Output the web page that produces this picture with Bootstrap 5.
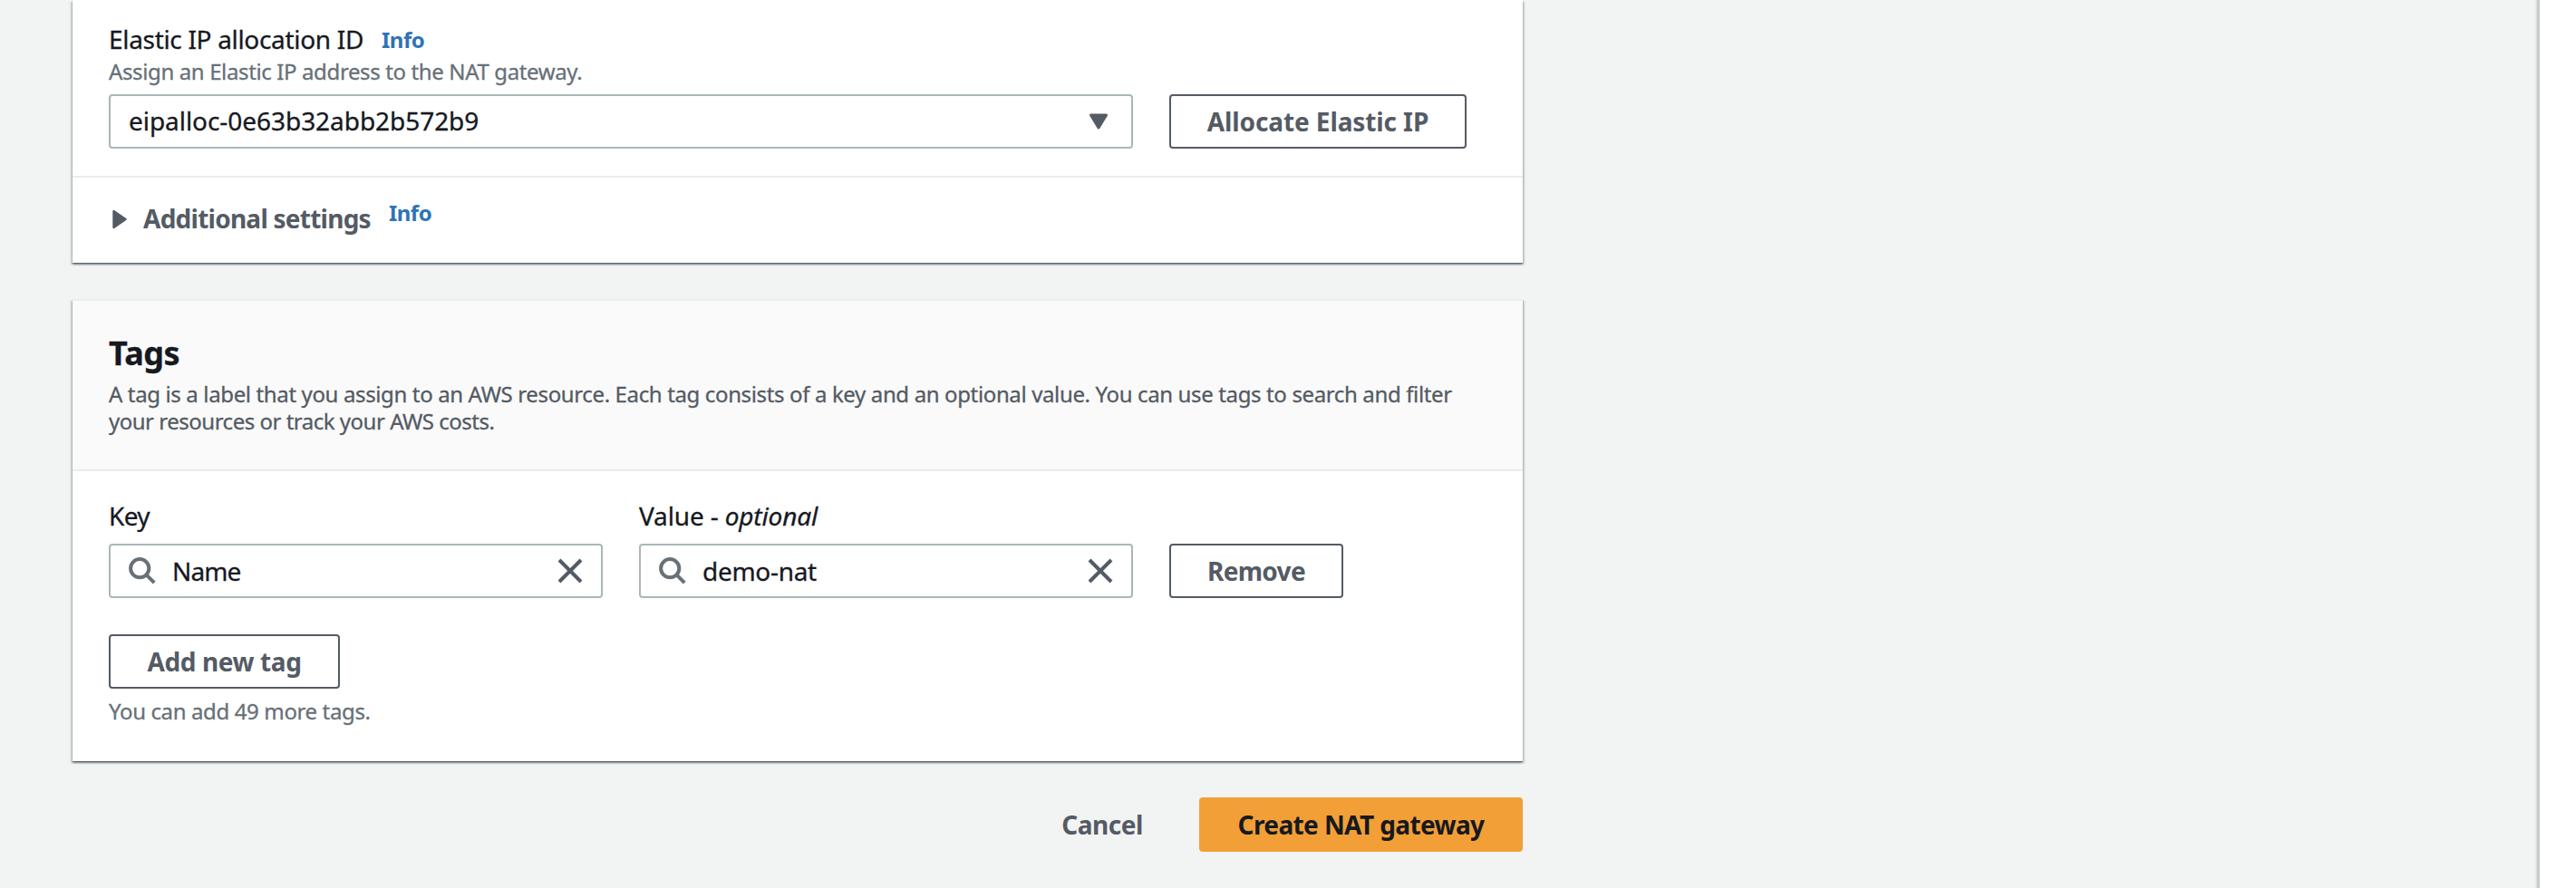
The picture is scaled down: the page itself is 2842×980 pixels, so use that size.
<!DOCTYPE html>
<html lang="en">
<head>
<meta charset="utf-8">
<title>Create NAT gateway</title>
<link rel="stylesheet" href="https://cdn.jsdelivr.net/npm/bootstrap@5.3.0/dist/css/bootstrap.min.css">
<style>
body{font-family:"Noto Sans","Open Sans",sans-serif;font-size:28px;line-height:40px;color:#16191f;background:#f2f3f3;letter-spacing:-.32px;-webkit-text-stroke:.3px}
.page{height:980px}
.main-col{width:1600px;margin-left:80px}
.side-panel{width:43px;background:#fff;border-left:3px solid #c9cccf;box-shadow:-1px 0 2px rgba(0,28,36,.14)}
.gap-col{gap:40px}

.panel{--bs-card-border-width:0;--bs-card-border-radius:0;--bs-card-inner-border-radius:0;--bs-card-color:#16191f;box-shadow:0 2px 2px 0 rgba(0,28,36,.3),2px 2px 2px 0 rgba(0,28,36,.15),-2px 2px 2px 0 rgba(0,28,36,.15),0 1px 1px rgba(0,28,36,.3)}
.panel-tags{margin-top:40px;border-top:2px solid #eaeded}
.panel-head{height:188px;padding:36px 40px 0;background:#fafafa;border-bottom:2px solid #eaeded}
.panel-title{font-size:36px;line-height:44px;letter-spacing:-.57px;margin:0 0 8px}
.panel-ip{padding:23px 40px 30px}
.panel-body{padding:29px 40px 39px}

.desc{font-size:24px;line-height:30px;letter-spacing:-.365px;color:#545b64;white-space:nowrap}
.desc-end{letter-spacing:-.49px}
.hint{font-size:24px;line-height:32px;letter-spacing:-.375px;color:#687078;margin-bottom:9px}
.hint-below{margin:9px 0 0}
.info{font-size:24px;font-weight:700;letter-spacing:-.5px;color:#2e73b8;text-decoration:none;-webkit-text-stroke:0}
.info-label{height:40px;line-height:42px;margin-left:20px}
.info-expander{margin:-6px 0 0 20px}

.field{height:60px;border:2px solid #aab7b8;border-radius:4px;background:#fff;padding:0 20px}
.field-select{width:1130px;padding:0 25px 2px 20px;letter-spacing:-.05px}
.field-select svg{margin-top:3px}
.tag-col{width:545px}
.tag-col label{margin-bottom:11px}
.tag-col .field span{margin-left:18px}
.lbl-key{letter-spacing:-.6px}
.lbl-value{letter-spacing:-.15px}
.txt-key{letter-spacing:-.85px}
.txt-value{letter-spacing:-.3px}

.btn-console{--bs-btn-font-size:28px;--bs-btn-font-weight:700;--bs-btn-line-height:40px;--bs-btn-color:#545b64;--bs-btn-border-color:#545b64;--bs-btn-bg:#fff;--bs-btn-border-width:2px;--bs-btn-border-radius:4px;height:60px;padding:8px 0;white-space:nowrap;-webkit-text-stroke:0}
.btn-allocate{width:328px;letter-spacing:-.1px}
.btn-remove{width:192px;letter-spacing:-.7px}
.btn-add{width:255px;margin-top:40px;letter-spacing:-.39px}
.btn-main{--bs-btn-color:#16191f;--bs-btn-bg:#f29f38;--bs-btn-border-color:#f29f38;width:357px;letter-spacing:-.6px}
.btn-plain{--bs-btn-bg:transparent;--bs-btn-border-color:transparent;width:134px;letter-spacing:-.5px}
.actions{margin-top:40px}

.expander{height:96px;border-top:2px solid #eaeded;padding:25px 40px 0 44px;color:#545b64}
.expander svg{margin-top:10px}
.expander-title{margin-left:18px;letter-spacing:-.75px;-webkit-text-stroke:0}
</style>
</head>
<body>
<div class="page d-flex justify-content-between overflow-hidden">
  <main class="main-col">
    <section class="card panel">
      <div class="panel-ip">
        <div class="d-flex"><label>Elastic IP allocation ID</label><a class="info info-label" href="#">Info</a></div>
        <div class="hint">Assign an Elastic IP address to the NAT gateway.</div>
        <div class="d-flex gap-col">
          <div class="field field-select d-flex align-items-center justify-content-between">
            <span>eipalloc-0e63b32abb2b572b9</span>
            <svg width="22" height="20" viewBox="0 0 22 20"><path d="M2.5 2h17L11 16z" fill="#545b64" stroke="#545b64" stroke-width="3" stroke-linejoin="round"/></svg>
          </div>
          <button class="btn btn-console btn-allocate">Allocate Elastic IP</button>
        </div>
      </div>
      <div class="expander d-flex">
        <svg width="16" height="22" viewBox="0 0 16 22"><path d="M1.5 2v18L14.5 11z" fill="#545b64" stroke="#545b64" stroke-width="2.4" stroke-linejoin="round"/></svg>
        <span class="expander-title fw-bold">Additional settings</span>
        <a class="info info-expander" href="#">Info</a>
      </div>
    </section>

    <section class="card panel panel-tags">
      <div class="card-header panel-head">
        <h2 class="panel-title fw-bold">Tags</h2>
        <div class="desc">A tag is a label that you assign to an AWS resource. Each tag consists of a key and an optional value. You can use tags to search and filter<br><span class="desc-end">your resources or track your AWS costs.</span></div>
      </div>
      <div class="card-body panel-body">
        <div class="d-flex align-items-end gap-col">
          <div class="tag-col">
            <label class="lbl-key d-block">Key</label>
            <div class="field d-flex align-items-center">
              <svg width="30" height="30" viewBox="0 0 30 30" fill="none" stroke="#687078" stroke-width="4"><circle cx="12.2" cy="12.2" r="10.1"/><path d="M19.2 19.2l9 9"/></svg>
              <span class="txt-key flex-grow-1">Name</span>
              <svg width="28" height="28" viewBox="0 0 28 28" fill="none" stroke="#545b64" stroke-width="4"><path d="M2 2l24 24M26 2L2 26"/></svg>
            </div>
          </div>
          <div class="tag-col">
            <label class="lbl-value d-block">Value - <em>optional</em></label>
            <div class="field d-flex align-items-center">
              <svg width="30" height="30" viewBox="0 0 30 30" fill="none" stroke="#687078" stroke-width="4"><circle cx="12.2" cy="12.2" r="10.1"/><path d="M19.2 19.2l9 9"/></svg>
              <span class="txt-value flex-grow-1">demo-nat</span>
              <svg width="28" height="28" viewBox="0 0 28 28" fill="none" stroke="#545b64" stroke-width="4"><path d="M2 2l24 24M26 2L2 26"/></svg>
            </div>
          </div>
          <button class="btn btn-console btn-remove">Remove</button>
        </div>
        <button class="btn btn-console btn-add d-block">Add new tag</button>
        <div class="hint hint-below">You can add 49 more tags.</div>
      </div>
    </section>

    <div class="actions d-flex justify-content-end gap-col">
      <button class="btn btn-console btn-plain">Cancel</button>
      <button class="btn btn-console btn-main">Create NAT gateway</button>
    </div>
  </main>
  <aside class="side-panel"></aside>
</div>
<script src="https://cdn.jsdelivr.net/npm/bootstrap@5.3.0/dist/js/bootstrap.bundle.min.js"></script>
</body>
</html>
